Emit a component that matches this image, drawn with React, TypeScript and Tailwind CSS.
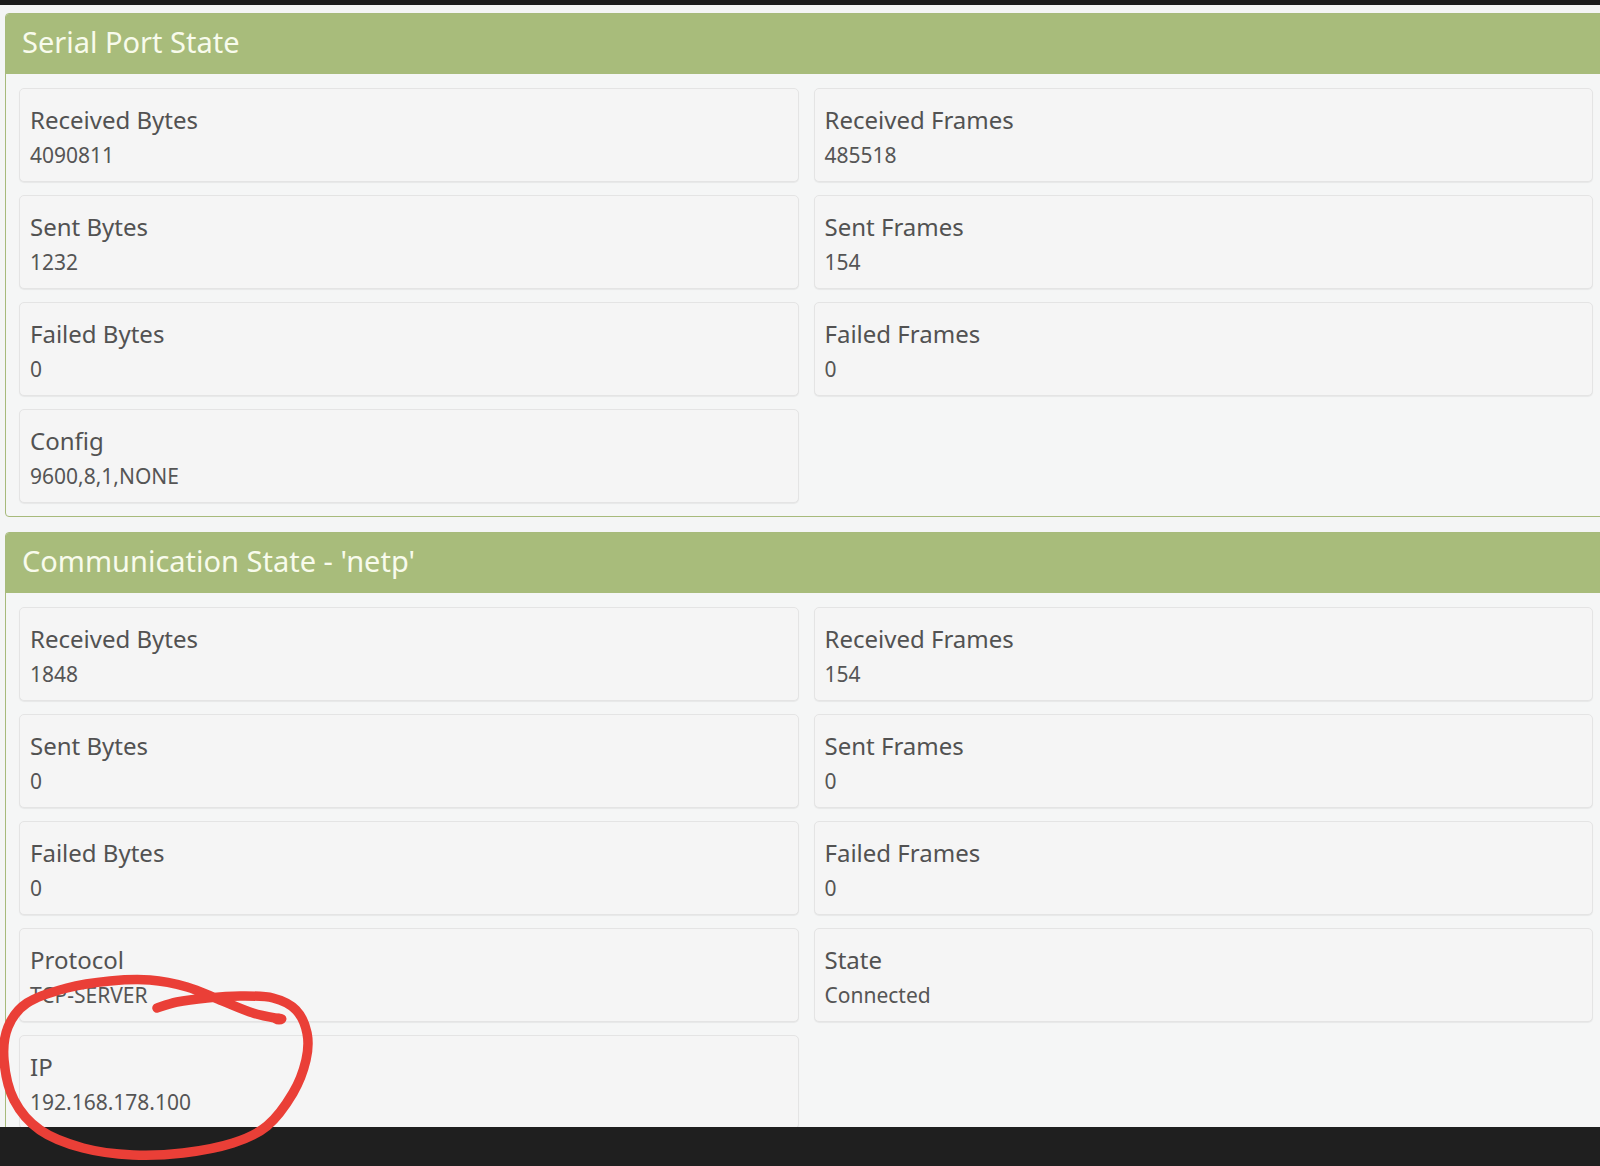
import React from 'react'

interface Stat {
  label: string
  value: string
}

const serialStats: Stat[] = [
  { label: 'Received Bytes', value: '4090811' },
  { label: 'Received Frames', value: '485518' },
  { label: 'Sent Bytes', value: '1232' },
  { label: 'Sent Frames', value: '154' },
  { label: 'Failed Bytes', value: '0' },
  { label: 'Failed Frames', value: '0' },
  { label: 'Config', value: '9600,8,1,NONE' },
]

const commStats: Stat[] = [
  { label: 'Received Bytes', value: '1848' },
  { label: 'Received Frames', value: '154' },
  { label: 'Sent Bytes', value: '0' },
  { label: 'Sent Frames', value: '0' },
  { label: 'Failed Bytes', value: '0' },
  { label: 'Failed Frames', value: '0' },
  { label: 'Protocol', value: 'TCP-SERVER' },
  { label: 'State', value: 'Connected' },
  { label: 'IP', value: '192.168.178.100' },
]

// hand drawn marker loop round the IP card
const loop: [number, number][] = [
  [157, 1008], [177, 1002], [207, 998], [240, 996], [273, 998], [296, 1010],
  [307, 1033], [306, 1060], [293, 1093], [267, 1126], [233, 1143], [183, 1153],
  [133, 1155], [83, 1148], [40, 1130], [14, 1100], [4, 1060], [8, 1027],
  [27, 1003], [67, 988], [110, 981], [150, 980], [187, 987], [220, 1000],
  [253, 1013], [280, 1019],
]

function smoothPath(pts: [number, number][]) {
  let d = `M${pts[0][0]},${pts[0][1]}`
  for (let i = 0; i < pts.length - 1; i++) {
    const p0 = pts[i - 1] || pts[i]
    const p1 = pts[i]
    const p2 = pts[i + 1]
    const p3 = pts[i + 2] || p2
    const c1x = p1[0] + (p2[0] - p0[0]) / 6
    const c1y = p1[1] + (p2[1] - p0[1]) / 6
    const c2x = p2[0] - (p3[0] - p1[0]) / 6
    const c2y = p2[1] - (p3[1] - p1[1]) / 6
    d += ` C${c1x},${c1y} ${c2x},${c2y} ${p2[0]},${p2[1]}`
  }
  return d
}

function StatCard({ stat }: { stat: Stat }) {
  return (
    <div className="h-[94px] rounded-[5px] border border-[#e4e4e4] bg-[#f5f5f5] pl-[10px] pt-[16px] shadow-[0_1px_1px_rgba(0,0,0,0.06)]">
      <div className="text-[24px] leading-[30px] text-[#525252]">{stat.label}</div>
      <div className="mt-[7px] text-[21px] leading-[26px] text-[#555555]">{stat.value}</div>
    </div>
  )
}

function Panel({ title, stats, className }: { title: string; stats: Stat[]; className?: string }) {
  return (
    <div className={`w-[1602px] shrink-0 overflow-hidden rounded-[4px] border border-[#a7ba7b] bg-[#f5f6f6] ${className || ''}`}>
      <div className="h-[60px] bg-[#a8bc7b] pl-[16px]">
        <h2 className="text-[29px] leading-[56px] font-normal text-[#f8fbec]">{title}</h2>
      </div>
      <div className="grid grid-cols-2 gap-x-[15px] gap-y-[13px] px-[13px] pt-[14px] pb-[13px]">
        {stats.map((s) => (
          <StatCard key={s.label} stat={s} />
        ))}
      </div>
    </div>
  )
}

export default function App() {
  return (
    <div
      className="relative flex h-[1166px] w-[1600px] flex-col overflow-hidden bg-[#f4f5f5]"
      style={{ fontFamily: '"Noto Sans", "Open Sans", sans-serif' }}
    >
      <div className="h-[5px] shrink-0 bg-[#1c1c1c]" />
      <div className="flex min-h-0 flex-1 flex-col overflow-hidden pt-[8px] pl-[5px]">
        <Panel title="Serial Port State" stats={serialStats} />
        <Panel title="Communication State - 'netp'" stats={commStats} className="mt-[15px]" />
      </div>
      <div className="h-[39px] shrink-0 bg-[#1f1f1f]" />

      <svg
        className="pointer-events-none absolute inset-0"
        width="1600"
        height="1166"
        viewBox="0 0 1600 1166"
      >
        <path
          d={smoothPath(loop)}
          fill="none"
          stroke="#ea3f37"
          strokeWidth="9.5"
          strokeLinecap="round"
          strokeLinejoin="round"
        />
        <ellipse cx="279" cy="1019" rx="7.5" ry="5.5" fill="#ea3f37" />
      </svg>
    </div>
  )
}
